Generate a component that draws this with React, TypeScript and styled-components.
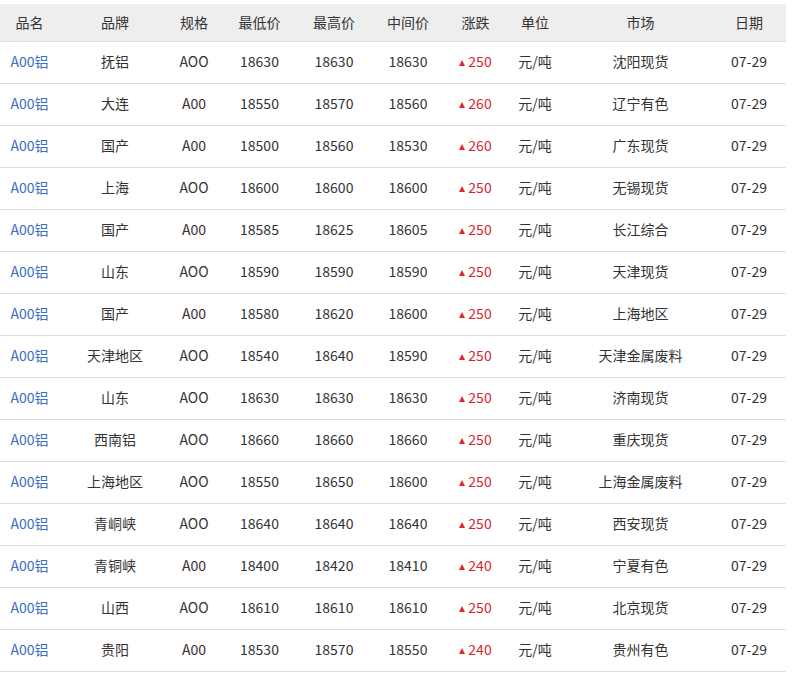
import React from "react";
import styled, { createGlobalStyle } from "styled-components";

const GlobalStyle = createGlobalStyle`
  body {
    margin: 0;
    padding-top: 4px;
    background: #fff;
    font-family: "Microsoft YaHei", "Noto Sans CJK SC", "Noto Sans", sans-serif;
  }
`;

const COLS = "59px 112px 46px 85px 64px 84px 51px 68px 143px 74px";

const Table = styled.div`
  width: 786px;
  font-size: 14px;
  color: #333;
`;

const HeadRow = styled.div`
  display: grid;
  grid-template-columns: ${COLS};
  height: 38px;
  padding-bottom: 1px;
  box-sizing: border-box;
  align-items: center;
  background: #eeeeee;
  border-bottom: 1px solid #dcdcdc;
`;

const Row = styled.div`
  display: grid;
  grid-template-columns: ${COLS};
  height: 42px;
  padding-bottom: 4px;
  box-sizing: border-box;
  align-items: center;
  border-bottom: 1px solid #dcdcdc;
`;

const Cell = styled.div<{ $link?: boolean }>`
  text-align: center;
  white-space: nowrap;
  color: ${(p) => (p.$link ? "#3a6ec0" : "#333")};
`;

const Change = styled.div`
  text-align: center;
  color: #d9252f;
  white-space: nowrap;
`;

const Arrow = styled.span`
  display: inline-block;
  width: 0;
  height: 0;
  border-left: 3px solid transparent;
  border-right: 3px solid transparent;
  border-bottom: 6px solid #e0262f;
  margin-right: 3px;
  vertical-align: 1px;
`;

const heads = ["品名", "品牌", "规格", "最低价", "最高价", "中间价", "涨跌", "单位", "市场", "日期"];

const rows: [string, string, string, string, string, string, string][] = [
  ["抚铝", "AOO", "18630", "18630", "18630", "250", "沈阳现货"],
  ["大连", "A00", "18550", "18570", "18560", "260", "辽宁有色"],
  ["国产", "A00", "18500", "18560", "18530", "260", "广东现货"],
  ["上海", "AOO", "18600", "18600", "18600", "250", "无锡现货"],
  ["国产", "A00", "18585", "18625", "18605", "250", "长江综合"],
  ["山东", "AOO", "18590", "18590", "18590", "250", "天津现货"],
  ["国产", "A00", "18580", "18620", "18600", "250", "上海地区"],
  ["天津地区", "AOO", "18540", "18640", "18590", "250", "天津金属废料"],
  ["山东", "AOO", "18630", "18630", "18630", "250", "济南现货"],
  ["西南铝", "AOO", "18660", "18660", "18660", "250", "重庆现货"],
  ["上海地区", "AOO", "18550", "18650", "18600", "250", "上海金属废料"],
  ["青峒峡", "AOO", "18640", "18640", "18640", "250", "西安现货"],
  ["青铜峡", "A00", "18400", "18420", "18410", "240", "宁夏有色"],
  ["山西", "AOO", "18610", "18610", "18610", "250", "北京现货"],
  ["贵阳", "A00", "18530", "18570", "18550", "240", "贵州有色"],
];

export default function App() {
  return (
    <>
      <GlobalStyle />
      <Table>
        <HeadRow>
          {heads.map((h) => (
            <Cell key={h}>{h}</Cell>
          ))}
        </HeadRow>
        {rows.map((r, i) => (
          <Row key={i}>
            <Cell $link>A00铝</Cell>
            <Cell>{r[0]}</Cell>
            <Cell>{r[1]}</Cell>
            <Cell>{r[2]}</Cell>
            <Cell>{r[3]}</Cell>
            <Cell>{r[4]}</Cell>
            <Change>
              <Arrow />
              {r[5]}
            </Change>
            <Cell>元/吨</Cell>
            <Cell>{r[6]}</Cell>
            <Cell>07-29</Cell>
          </Row>
        ))}
      </Table>
    </>
  );
}
